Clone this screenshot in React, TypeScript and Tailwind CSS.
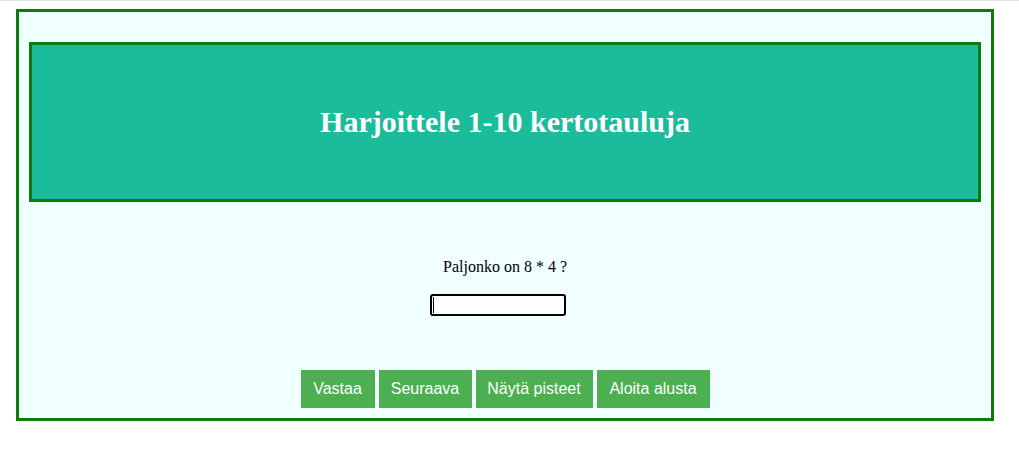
import { useState } from "react";

export default function App() {
  const [answer, setAnswer] = useState("");

  return (
    <div className="min-h-screen w-full bg-white">
      <div className="h-px w-full bg-[#e4e0ea]" />
      <div className="pl-[16px] pt-[8px]">
        <div className="w-[978px] h-[412px] border-[3px] border-[#0b7d0b] bg-[#f0ffff] px-[10px] pt-[30px] pb-[10px] flex flex-col">
          <div className="h-[160px] border-[3px] border-[#0b7d0b] bg-[#1abc9c] flex items-center justify-center">
            <h1 className="text-[30px] font-bold text-white font-['Liberation_Serif',serif] leading-none">
              Harjoittele 1-10 kertotauluja
            </h1>
          </div>

          <p className="mt-[53px] text-center text-[16px] leading-6 text-black font-['Liberation_Serif',serif]">
            Paljonko on 8 * 4 ?
          </p>

          <div className="mt-[15px] flex justify-center">
            <div className="relative mr-[15px]">
              <input
                type="text"
                value={answer}
                onChange={(e) => setAnswer(e.target.value)}
                className="block w-[136px] h-[22px] border-2 border-black rounded-[3px] bg-white px-[2px] text-[13px] font-['Liberation_Sans',sans-serif] outline-none"
              />
              {answer === "" && (
                <span className="pointer-events-none absolute left-[3px] top-[3px] h-[16px] w-px bg-black" />
              )}
            </div>
          </div>

          <div className="mt-auto flex justify-center gap-[4px] font-['Liberation_Sans',Arial,sans-serif]">
            <button className="w-[74px] bg-[#4caf50] text-white text-[16px] leading-[18px] py-[10px]">Vastaa</button>
            <button className="w-[93px] bg-[#4caf50] text-white text-[16px] leading-[18px] py-[10px]">Seuraava</button>
            <button className="w-[117px] bg-[#4caf50] text-white text-[16px] leading-[18px] py-[10px]">Näytä pisteet</button>
            <button className="w-[113px] bg-[#4caf50] text-white text-[16px] leading-[18px] py-[10px]">Aloita alusta</button>
          </div>
        </div>
      </div>
    </div>
  );
}
